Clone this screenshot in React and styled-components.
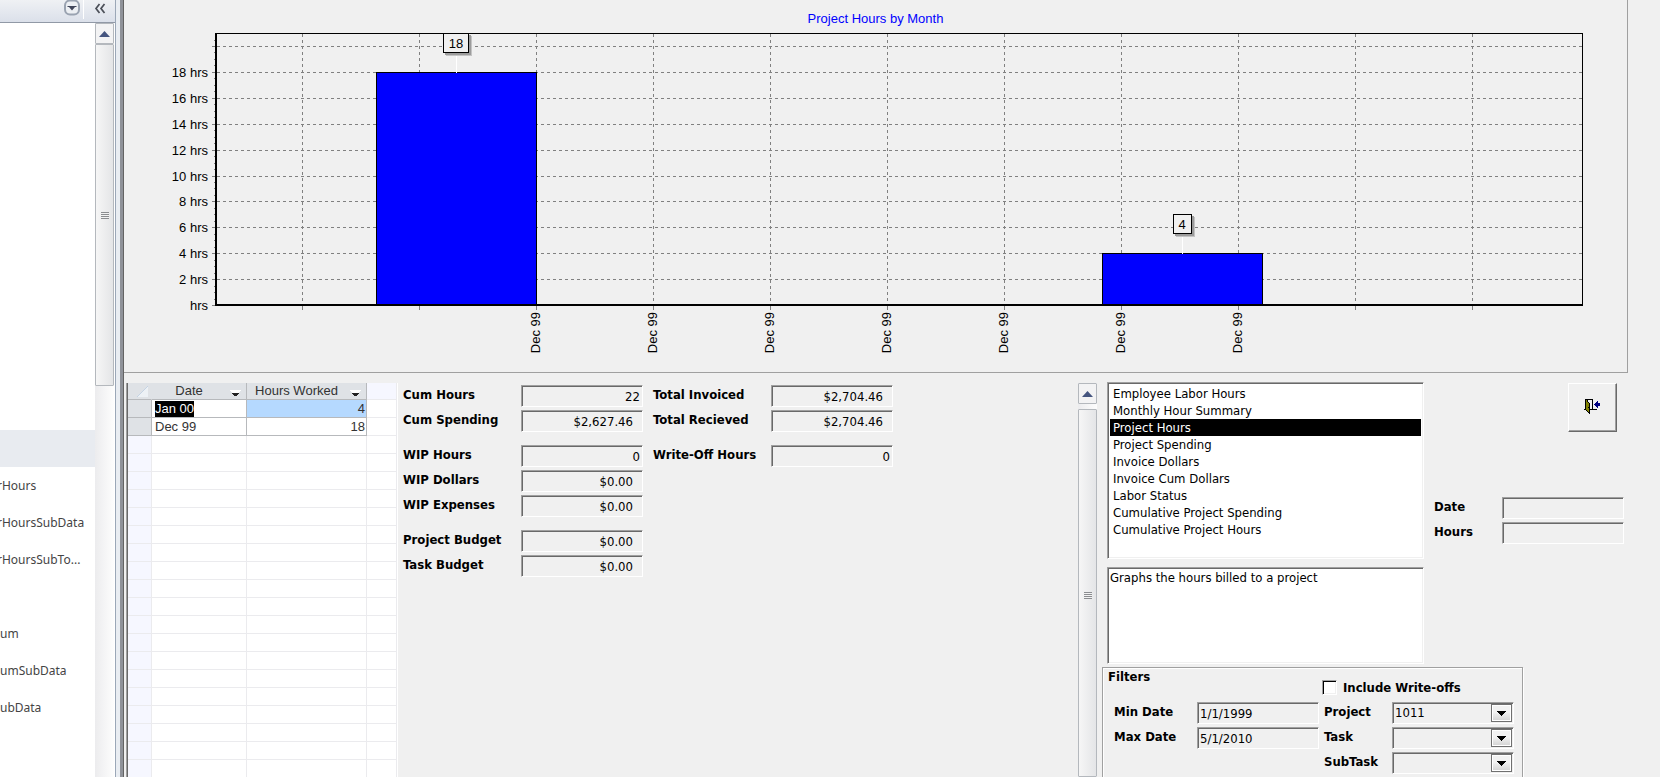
import React, { useLayoutEffect, useRef, useState } from "react";
import styled, { createGlobalStyle, css } from "styled-components";

const FORM_FONT = `"DejaVu Sans Condensed", "DejaVu Sans", Tahoma, sans-serif`;
const GRID_FONT = `"Liberation Sans", Arial, sans-serif`;
const NAV_FONT = `"Noto Sans", "Open Sans", sans-serif`;

const GlobalStyle = createGlobalStyle`
  *, *::before, *::after { box-sizing: border-box; }
  body { margin: 0; background: #f0f0f0; color: #000; font: 13px/20px ${FORM_FONT}; }
  input, select, button, textarea { font: inherit; color: inherit; margin: 0; border-radius: 0; outline: none; }
`;

const sunken = css`
  border: 1px solid;
  border-color: #a0a0a0 #fff #fff #a0a0a0;
  box-shadow: inset 1px 1px #696969, inset -1px -1px #f0f0f0;
`;

const Window = styled.div`
  display: flex;
  height: 100vh;
  overflow: hidden;
`;

/* ---------- navigation pane ---------- */

const NavPane = styled.aside`
  display: flex;
  flex-direction: column;
  flex: 0 0 116px;
  border-right: 1px solid #9ba7b7;
  background: #fff;
`;

const NavHeader = styled.header`
  display: flex;
  justify-content: flex-end;
  flex: 0 0 23px;
  background: linear-gradient(#eff1f4, #dbe0ea);
  border-bottom: 1px solid #9199a6;
`;

const NavHeaderButton = styled.button`
  display: flex;
  align-items: flex-start;
  justify-content: center;
  width: ${(p) => p.$width}px;
  height: 19px;
  padding: 0;
  border: 0;
  border-right: ${(p) => (p.$divided ? "1px solid #fff" : "0")};
  background: transparent;
`;

const NavBody = styled.div`
  display: flex;
  flex: 1;
  min-height: 0;
  padding-right: 1px;
`;

const NavList = styled.nav`
  flex: 1;
  min-width: 0;
  overflow: hidden;
`;

const NavItem = styled.a`
  display: block;
  height: 37px;
  margin-left: ${(p) => (p.$cut ? "-3px" : "0")};
  background: ${(p) => (p.$active ? "#e8ebf0" : "transparent")};
  color: #444;
  font: 12px/37px ${NAV_FONT};
  text-decoration: none;
  white-space: nowrap;
`;

const Splitter = styled.div`
  flex: 0 0 8px;
  background: #e9edf2;
  border-right: 1px solid #636363;
  box-shadow: inset -3px 0 #8f9299;
`;

/* ---------- scroll bars ---------- */

const ScrollTrack = styled.div`
  display: flex;
  flex-direction: column;
  flex: 0 0 19px;
  background: linear-gradient(90deg, #ececee, #fdfdfd);
`;

const ScrollButton = styled.button`
  display: flex;
  align-items: center;
  justify-content: center;
  flex: 0 0 21px;
  padding: 0;
  border: 1px solid #b4b8bd;
  border-radius: 1px;
  background: #f3f3f4;
`;

const ScrollThumb = styled.div`
  display: flex;
  align-items: center;
  justify-content: center;
  flex: ${(p) => (p.$height ? `0 0 ${p.$height}px` : "1")};
  margin-top: ${(p) => p.$gap}px;
  padding-top: ${(p) => p.$gap}px;
  border: 1px solid #b4b8bd;
  border-radius: 1px;
  background: linear-gradient(90deg, #f6f6f6, #e4e5e7);
`;

const Grip = styled.i`
  width: 8px;
  height: 7px;
  background: repeating-linear-gradient(#8b8d90 0 1px, #f2f2f2 1px 2px);
`;

/* ---------- chart ---------- */

const Main = styled.main`
  display: flex;
  flex-direction: column;
  flex: 1;
  min-width: 0;
`;

const ChartPanel = styled.section`
  flex: 0 0 auto;
  margin-right: 32px;
  padding-top: 8px;
  border: solid #a0a0a0;
  border-width: 0 1px 1px 0;
`;

const ChartTitle = styled.h1`
  height: 20px;
  margin: 0;
  color: #00f;
  font: 13px/22px ${GRID_FONT};
  text-align: center;
`;

const ChartSvg = styled.svg`
  display: block;
  width: 100%;
  height: 344px;
  font: 13px ${GRID_FONT};
  shape-rendering: crispEdges;
`;

/* ---------- datasheet ---------- */

const Lower = styled.div`
  display: flex;
  flex: 1;
  min-height: 0;
  padding-left: 2px;
`;

const SheetFrame = styled.section`
  flex: 0 0 272px;
  margin-top: 10px;
  overflow: hidden;
  border-left: 1px solid #a0a0a0;
  border-right: 1px solid #fff;
  box-shadow: inset 1px 0 #696969;
  padding-left: 1px;
  background: #fff;
`;

const Sheet = styled.table`
  width: 100%;
  table-layout: fixed;
  border-collapse: separate;
  border-spacing: 0;
  color: #333;
  font: 13px/16px ${GRID_FONT};
`;

const HeadCell = styled.th`
  height: 17px;
  padding: 0;
  font-weight: 400;
  background: ${(p) => (p.$blank ? "#f6f7ff" : "#dfe2e6")};
  border: solid ${(p) => (p.$blank ? "#ebebee" : "#b7b9bc")};
  border-width: 0 1px 1px 0;
  border-right-color: ${(p) => (p.$corner ? "#dfe2e6" : p.$blank ? "#ebebee" : "#b7b9bc")};
`;

const HeadContent = styled.div`
  display: flex;
  align-items: center;
  justify-content: ${(p) => (p.$end ? "flex-end" : "space-between")};
  height: 16px;
  padding-right: ${(p) => (p.$end ? 3 : 5)}px;
  white-space: nowrap;
`;

const HeadText = styled.span`
  flex: 1;
  padding-right: 4px;
  text-align: center;
`;

const HeadArrow = styled.button`
  display: flex;
  align-items: flex-end;
  padding: 4px 0 0;
  border: 0;
  background: transparent;
`;

const Cell = styled.td`
  height: 18px;
  padding: 0 1px 0 3px;
  border: solid ${(p) => (p.$filled ? "#b7b9bc" : "#ebebee")};
  border-width: 0 1px 1px 0;
  background: ${(p) => p.$bg || "#fff"};
  text-align: ${(p) => (p.$number ? "right" : "left")};
`;

const Selected = styled.mark`
  display: inline-block;
  background: #000;
  color: #fff;
`;

/* ---------- form fields ---------- */

const Summary = styled.section`
  display: grid;
  flex: 1;
  grid-template-columns: 118px 122px 10px 118px 122px;
  row-gap: 3px;
  align-content: start;
  margin: 12px 0 0 5px;
`;

const Break = styled.div`
  grid-column: 1 / -1;
  height: 7px;
`;

const Label = styled.label`
  grid-column: ${(p) => p.$col || "auto"};
  font-weight: 700;
  line-height: 20px;
  white-space: nowrap;
`;

const Field = styled.input`
  ${sunken}
  width: 122px;
  height: 22px;
  padding: 1px ${(p) => (p.$money ? 9 : 2)}px 1px 2px;
  background: #f0f0f0;
  text-align: ${(p) => (p.$number ? "right" : "left")};
`;

/* ---------- report panel ---------- */

const MiddleScroll = styled(ScrollTrack)`
  margin: 10px 5px 0 0;
`;

const ReportPanel = styled.section`
  flex: 0 0 558px;
  padding-top: 9px;
`;

const ReportTop = styled.div`
  display: flex;
  gap: 10px;
  padding-left: 5px;
`;

const ReportStack = styled.div`
  display: flex;
  flex-direction: column;
  gap: 8px;
`;

const ReportList = styled.select`
  ${sunken}
  appearance: none;
  width: 317px;
  height: 177px;
  padding: 2px;
  background: #fff;
  overflow: hidden;
  option {
    height: 17px;
    min-height: 17px;
    padding: 1px 3px 0;
    line-height: 16px;
    color: #000;
  }
  option:checked {
    background: #000 linear-gradient(#000, #000);
    color: #fff;
  }
`;

const Description = styled.textarea`
  ${sunken}
  display: block;
  width: 317px;
  height: 97px;
  padding: 1px 2px;
  resize: none;
  background: #fff;
  line-height: 17px;
`;

const SideColumn = styled.div`
  display: grid;
  grid-template-columns: 68px 122px;
  row-gap: 3px;
  align-content: start;
  margin-top: 1px;
`;

const CloseButton = styled.button`
  grid-column: 2;
  justify-self: end;
  display: flex;
  justify-content: center;
  width: 49px;
  height: 49px;
  margin: 0 7px 62px 0;
  padding: 15px 1px 0 0;
  border: 1px solid;
  border-color: #fff #696969 #696969 #fff;
  box-shadow: inset -1px -1px #a0a0a0;
  background: #f0f0f0;
`;

const Filters = styled.fieldset`
  min-width: 0;
  width: 421px;
  height: 140px;
  margin: 3px 0 0;
  padding: 0 0 0 11px;
  border: 1px solid #a0a0a0;
  box-shadow: inset 1px 1px #fff, 1px 1px #fff;
`;

const FiltersTitle = styled.legend`
  float: left;
  width: 100%;
  height: 12px;
  margin-left: -6px;
  padding: 0;
  font-weight: 700;
  line-height: 18px;
`;

const FiltersGrid = styled.div`
  clear: both;
  display: grid;
  grid-template-columns: 83px 122px 5px 68px 122px;
  row-gap: 3px;
`;

const CheckRow = styled.div`
  grid-column: 3 / -1;
  display: flex;
  align-items: flex-start;
  gap: 6px;
  height: 19px;
  padding-left: 3px;
  label { line-height: 15px; }
`;

const CheckBox = styled.input`
  appearance: none;
  width: 15px;
  height: 15px;
  border: 1px solid;
  border-color: #a0a0a0 #fff #fff #a0a0a0;
  box-shadow: inset 1px 1px #000, inset -1px -1px #f0f0f0;
  background: #fff;
`;

const ComboBox = styled.div`
  position: relative;
  width: 122px;
  height: 22px;
`;

const Combo = styled.select`
  ${sunken}
  appearance: none;
  width: 100%;
  height: 100%;
  padding: 0 24px 0 2px;
  background: #f0f0f0;
`;

const ComboArrow = styled.span`
  position: absolute;
  top: 2px;
  right: 2px;
  display: flex;
  align-items: center;
  justify-content: center;
  width: 21px;
  height: 18px;
  border: 1px solid #707070;
  box-shadow: inset 0 0 0 1px #fff;
  background: linear-gradient(#f2f2f2 45%, #d2d2d2);
  pointer-events: none;
`;

/* ---------- drawings ---------- */

const UpArrow = () => (
  <svg width="11" height="6" viewBox="0 0 11 6" aria-hidden="true">
    <path d="M5.5 0 11 6H0Z" fill="#45557f" />
  </svg>
);

const NavMenuIcon = () => (
  <svg width="17" height="17" viewBox="0 0 17 17" aria-hidden="true">
    <rect x="2" y="0.5" width="14" height="14" rx="5" fill="#eceff3" stroke="#9aa3b1" strokeWidth="2" />
    <path d="M4.500 6h9v1h-9zM6 7h6L9 10.500Z" fill="#41465a" />
  </svg>
);

const CollapseIcon = () => (
  <svg width="12" height="14" viewBox="0 0 12 14" fill="none" stroke="#4b4f58" strokeWidth="1.700" aria-hidden="true">
    <path d="M5.500 4 2 8.500 5.500 13M10.500 4 7 8.500l3.500 4.500" />
  </svg>
);

const SortArrow = () => (
  <svg width="11" height="7" viewBox="0 0 11 7" aria-hidden="true" shapeRendering="crispEdges">
    <path d="M0 0h11v1h-1v1H9v1H2V2H1V1H0Z" fill="#fff" />
    <path d="M2 3h7v1H8v1H7v1H4V5H3V4H2Z" fill="#222" />
  </svg>
);

const CornerMark = () => (
  <svg width="11" height="11" viewBox="0 0 11 11" aria-hidden="true">
    <path d="M11 0v11H0Z" fill="#edf1f5" />
    <path d="M11 0 0 11" stroke="#c4d3e4" />
  </svg>
);

const DownArrow = () => (
  <svg width="9" height="5" viewBox="0 0 9 5" aria-hidden="true" shapeRendering="crispEdges">
    <path d="M0 0h9v1H8v1H7v1H6v1H5v1H4V4H3V3H2V2H1V1H0Z" />
  </svg>
);

const DoorIcon = () => (
  <svg width="16" height="16" viewBox="0 0 16 16" aria-hidden="true" shapeRendering="crispEdges">
    <path d="M1 0h8v10h4v1H0v-1h1Z" fill="#000" />
    <path d="M4 1h4v9H4Z" fill="#f0f0f0" />
    <path d="M1 0h1v1h1v1h1v1h1v1h1v11H5v-1H4v-1H3v-1H2v-1H1Z" fill="#000" />
    <path d="M2 1v10h1v1h1v1h1V4H4V3H3V1Z" fill="#808000" />
    <path d="M4 8h1v1H4Z" fill="#000" />
    <path d="M10 5h1V4h1V3h1V2h1v2h2v3h-2v2h-1V8h-1V7h-1V6h-1Z" fill="#000080" />
  </svg>
);

/* ---------- data ---------- */

const NAV_ITEMS = [
  ...Array(11).fill(""),
  "*",
  "rHours",
  "rHoursSubData",
  "rHoursSubTo...",
  "",
  "um",
  "umSubData",
  "ubData",
];

const REPORTS = [
  "Employee Labor Hours",
  "Monthly Hour Summary",
  "Project Hours",
  "Project Spending",
  "Invoice Dollars",
  "Invoice Cum Dollars",
  "Labor Status",
  "Cumulative Project Spending",
  "Cumulative Project Hours",
];

const TOTALS = [
  [["Cum Hours", "22"], ["Total Invoiced", "$2,704.46"]],
  [["Cum Spending", "$2,627.46"], ["Total Recieved", "$2,704.46"]],
  null,
  [["WIP Hours", "0"], ["Write-Off Hours", "0"]],
  [["WIP Dollars", "$0.00"]],
  [["WIP Expenses", "$0.00"]],
  null,
  [["Project Budget", "$0.00"]],
  [["Task Budget", "$0.00"]],
];

const BARS = [
  { value: 18, from: 0.1171, to: 0.2343 },
  { value: 4, from: 0.6486, to: 0.7657 },
];

/* ---------- chart drawing ---------- */

function HoursChart() {
  const ref = useRef(null);
  const [width, setWidth] = useState(1502);

  useLayoutEffect(() => {
    const measure = () => setWidth(ref.current.getBoundingClientRect().width);
    measure();
    const observer = new ResizeObserver(measure);
    observer.observe(ref.current);
    return () => observer.disconnect();
  }, []);

  const left = 92;
  const top = 5;
  const bottom = 277;
  const right = Math.round(width) - 45;
  const span = right - left;
  const atX = (f) => Math.round(left + f * span);
  const atY = (hrs) => Math.round(bottom - hrs * 12.95);
  const columns = Array.from({ length: 11 }, (_, i) => atX(0.0628 + 0.0857 * i));
  const hours = Array.from({ length: 11 }, (_, i) => i * 2);

  return (
    <ChartSvg ref={ref} role="img" aria-label="Project hours by month">
      <g stroke="#808080" strokeDasharray="3 3">
        {hours.slice(1).map((h) => (
          <line key={h} x1={left + 1} x2={right} y1={atY(h) + 0.5} y2={atY(h) + 0.5} />
        ))}
        {columns.map((x) => (
          <line key={x} x1={x + 0.5} x2={x + 0.5} y1={top + 1} y2={bottom} />
        ))}
      </g>
      <g stroke="#808080">
        {hours.map((h) => (
          <line key={h} x1={left - 4} x2={left} y1={atY(h) + 0.5} y2={atY(h) + 0.5} />
        ))}
        {Array.from({ length: 42 }, (_, i) => atY(i / 2)).map((y) => (
          <line key={y} x1={left - 2} x2={left} y1={y + 0.5} y2={y + 0.5} />
        ))}
        {columns.map((x) => (
          <line key={x} x1={x + 0.5} x2={x + 0.5} y1={bottom} y2={bottom + 5} />
        ))}
      </g>
      <g textAnchor="end">
        {hours.slice(0, 10).map((h) => (
          <text key={h} x={left - 8} y={atY(h) + 5}>
            {h ? `${h} hrs` : "hrs"}
          </text>
        ))}
        {columns.slice(2, 9).map((x) => (
          <text key={x} transform={`translate(${x + 4} ${bottom + 7}) rotate(-90)`}>
            Dec 99
          </text>
        ))}
      </g>
      {BARS.map(({ value, from, to }) => (
        <rect
          key={value}
          x={atX(from) + 0.5}
          y={atY(value) + 0.5}
          width={atX(to) - atX(from)}
          height={bottom - atY(value) - 1}
          fill="#00f"
          stroke="#000"
        />
      ))}
      <path d={`M${left - 1} ${top + 0.5}H${right + 0.5}V${bottom}`} fill="none" stroke="#000" />
      <path d={`M${left} ${top}V${bottom}H${right + 1}`} fill="none" stroke="#000" strokeWidth="2" />
      {BARS.map(({ value, from, to }) => {
        const mid = Math.round((atX(from) + atX(to)) / 2);
        const w = value > 9 ? 25 : 18;
        const y = Math.max(top, atY(value) - 39);
        const x = mid - (w + 1) / 2;
        return (
          <g key={value}>
            <line x1={mid + 0.5} x2={mid + 0.5} y1={y + 20} y2={atY(value) + 1} stroke="#fff" />
            <rect x={Math.round(x) + 3} y={y + 3} width={w + 1} height="20" fill="#c4c4c4" />
            <rect x={Math.round(x) + 2} y={y + 2} width={w + 1} height="20" fill="#9c9c9c" />
            <rect x={Math.round(x) + 0.5} y={y + 0.5} width={w} height="19" fill="#f0f0f0" stroke="#000" />
            <text x={mid} y={y + 15} textAnchor="middle">
              {value}
            </text>
          </g>
        );
      })}
    </ChartSvg>
  );
}

/* ---------- parts ---------- */

function TotalField({ label, value, second }) {
  const id = label.replace(/\W/g, "");
  return (
    <>
      <Label htmlFor={id} $col={second ? 4 : 1}>
        {label}
      </Label>
      <Field id={id} defaultValue={value} $number $money={value.startsWith("$")} />
    </>
  );
}

function FilterCombo({ label, options }) {
  const id = `filter${label}`;
  return (
    <>
      <Label htmlFor={id} $col={4}>
        {label}
      </Label>
      <ComboBox>
        <Combo id={id}>
          {options.map((o) => (
            <option key={o}>{o}</option>
          ))}
        </Combo>
        <ComboArrow>
          <DownArrow />
        </ComboArrow>
      </ComboBox>
    </>
  );
}

function Datasheet() {
  const gutter = "#dfe2e6";
  return (
    <SheetFrame>
      <Sheet>
        <colgroup>
          <col style={{ width: 24 }} />
          <col style={{ width: 95 }} />
          <col style={{ width: 120 }} />
          <col />
        </colgroup>
        <thead>
          <tr>
            <HeadCell $corner>
              <HeadContent $end>
                <CornerMark />
              </HeadContent>
            </HeadCell>
            {["Date", "Hours Worked"].map((name) => (
              <HeadCell key={name}>
                <HeadContent>
                  <HeadText>{name}</HeadText>
                  <HeadArrow aria-label={`Sort ${name}`}>
                    <SortArrow />
                  </HeadArrow>
                </HeadContent>
              </HeadCell>
            ))}
            <HeadCell $blank />
          </tr>
        </thead>
        <tbody>
          <tr>
            <Cell $filled $bg={gutter} />
            <Cell $filled>
              <Selected>Jan 00</Selected>
            </Cell>
            <Cell $filled $number $bg="#b5d9ff">
              4
            </Cell>
            <Cell />
          </tr>
          <tr>
            <Cell $filled $bg={gutter} />
            <Cell $filled>Dec 99</Cell>
            <Cell $filled $number>
              18
            </Cell>
            <Cell />
          </tr>
          {Array.from({ length: 20 }, (_, i) => (
            <tr key={i}>
              <Cell $bg="#f6f7ff" />
              <Cell />
              <Cell />
              <Cell />
            </tr>
          ))}
        </tbody>
      </Sheet>
    </SheetFrame>
  );
}

export default function App() {
  return (
    <Window>
      <GlobalStyle />
      <NavPane>
        <NavHeader>
          <NavHeaderButton $width={24} $divided aria-label="Navigation options">
            <NavMenuIcon />
          </NavHeaderButton>
          <NavHeaderButton $width={31} aria-label="Collapse navigation">
            <CollapseIcon />
          </NavHeaderButton>
        </NavHeader>
        <NavBody>
          <NavList>
            {NAV_ITEMS.map((name, i) => (
              <NavItem key={i} href="#" $active={name === "*"} $cut={name.startsWith("r")}>
                {name === "*" ? "" : name}
              </NavItem>
            ))}
          </NavList>
          <ScrollTrack>
            <ScrollButton aria-label="Scroll up">
              <UpArrow />
            </ScrollButton>
            <ScrollThumb $height={342} $gap={0}>
              <Grip />
            </ScrollThumb>
          </ScrollTrack>
        </NavBody>
      </NavPane>
      <Splitter />
      <Main>
        <ChartPanel>
          <ChartTitle>Project Hours by Month</ChartTitle>
          <HoursChart />
        </ChartPanel>
        <Lower>
          <Datasheet />
          <Summary>
            {TOTALS.map((pair, i) =>
              pair ? (
                pair.map(([label, value], n) => (
                  <TotalField key={label} label={label} value={value} second={n === 1} />
                ))
              ) : (
                <Break key={i} />
              )
            )}
          </Summary>
          <MiddleScroll>
            <ScrollButton aria-label="Scroll up">
              <UpArrow />
            </ScrollButton>
            <ScrollThumb $gap={5}>
              <Grip />
            </ScrollThumb>
          </MiddleScroll>
          <ReportPanel>
            <ReportTop>
              <ReportStack>
                <ReportList size={9} defaultValue="Project Hours" aria-label="Report">
                  {REPORTS.map((r) => (
                    <option key={r}>{r}</option>
                  ))}
                </ReportList>
                <Description aria-label="Report description" defaultValue="Graphs the hours billed to a project" />
              </ReportStack>
              <SideColumn>
                <CloseButton aria-label="Close form">
                  <DoorIcon />
                </CloseButton>
                <Label htmlFor="pointDate">Date</Label>
                <Field id="pointDate" />
                <Label htmlFor="pointHours">Hours</Label>
                <Field id="pointHours" />
              </SideColumn>
            </ReportTop>
            <Filters>
              <FiltersTitle>Filters</FiltersTitle>
              <FiltersGrid>
                <CheckRow>
                  <CheckBox id="writeOffs" type="checkbox" />
                  <Label htmlFor="writeOffs">Include Write-offs</Label>
                </CheckRow>
                <Label htmlFor="minDate" $col={1}>Min Date</Label>
                <Field id="minDate" defaultValue="1/1/1999" />
                <FilterCombo label="Project" options={["1011"]} />
                <Label htmlFor="maxDate" $col={1}>Max Date</Label>
                <Field id="maxDate" defaultValue="5/1/2010" />
                <FilterCombo label="Task" options={[""]} />
                <FilterCombo label="SubTask" options={[""]} />
              </FiltersGrid>
            </Filters>
          </ReportPanel>
        </Lower>
      </Main>
    </Window>
  );
}
